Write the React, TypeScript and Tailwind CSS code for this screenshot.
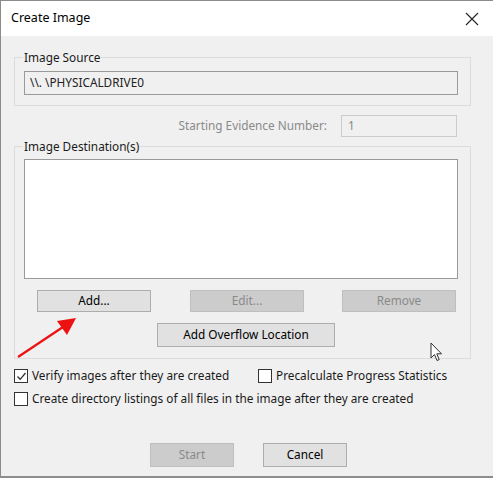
import React from 'react';

const font = { fontFamily: '"Noto Sans", "Open Sans", sans-serif' };

const Btn = ({ label, disabled, w, h = 'h-[22px]' }: { label: string; disabled?: boolean; w: string; h?: string }) => (
  <div
    className={`${w} ${h} flex items-center justify-center text-[11.8px] border ${
      disabled ? 'bg-[#cccccc] border-[#bfbfbf] text-[#8a8a8a]' : 'bg-[#e1e1e1] border-[#adadad] text-black'
    }`}
  >
    {label}
  </div>
);

const Check = ({ checked, label }: { checked?: boolean; label: string }) => (
  <div className="flex items-center h-4">
    <div className="w-[14px] h-[14px] border border-[#333] bg-white flex items-center justify-center">
      {checked && (
        <svg width="11" height="11" viewBox="0 0 11 11">
          <path d="M1.5 5.5 L4.2 8.3 L9.5 2" fill="none" stroke="#333" strokeWidth="1.3" />
        </svg>
      )}
    </div>
    <span className="ml-1 text-[11.8px] text-[#1a1a1a]">{label}</span>
  </div>
);

export default function App() {
  return (
    <div className="relative w-[493px] h-[478px] bg-[#f0f0f0] overflow-hidden border-t border-l border-[#8c8c8c]" style={font}>
      {/* Title bar */}
      <div className="h-[35px] bg-white flex items-center justify-between pl-[10px] pr-[14px]">
        <span className="text-[12.5px] text-black">Create Image</span>
        <svg width="14" height="14" viewBox="0 0 14 14">
          <path d="M1 1 L13 13 M13 1 L1 13" stroke="#222" strokeWidth="1.1" />
        </svg>
      </div>

      <div className="pl-[13px] pr-[22px] flex flex-col">
        {/* Image Source */}
        <fieldset className="mt-[13px] border border-[#dcdcdc] pl-[9px] pr-[12px] pb-[10px]">
          <legend className="px-[1px] -ml-[1px] text-[11.8px] leading-4 text-[#1a1a1a]">Image Source</legend>
          <div className="mt-[6px] h-[24px] border border-[#9a9a9a] bg-[#f0f0f0] flex items-center pl-[5px] text-[11.8px] text-[#222]">
            {'\\\\. \\PHYSICALDRIVE0'}
          </div>
        </fieldset>

        {/* Starting Evidence Number */}
        <div className="mt-[9px] flex items-center justify-end pr-[14px]">
          <span className="text-[11.8px] text-[#8a8a8a] mr-[14px]">Starting Evidence Number:</span>
          <div className="w-[116px] h-[22px] border border-[#cccccc] bg-[#f0f0f0] flex items-center pl-[6px] text-[11.8px] text-[#8a8a8a]">1</div>
        </div>

        {/* Image Destination(s) */}
        <fieldset className="mt-[1px] border border-[#dcdcdc] pl-[9px] pr-[12px] pb-[11px]">
          <legend className="px-[1px] -ml-[1px] text-[11.8px] leading-4 text-[#1a1a1a]">Image Destination(s)</legend>
          <div className="mt-[5px] h-[120px] border border-[#9a9a9a] bg-white" />
          <div className="mt-[11px] flex pl-[13px]">
            <Btn label="Add..." w="w-[114px]" />
            <div className="ml-[39px]">
              <Btn label="Edit..." w="w-[114px]" disabled />
            </div>
            <div className="ml-[38px]">
              <Btn label="Remove" w="w-[114px]" disabled />
            </div>
          </div>
          <div className="mt-[11px] flex pl-[133px]">
            <Btn label="Add Overflow Location" w="w-[178px]" h="h-[24px]" />
          </div>
        </fieldset>

        {/* Options */}
        <div className="mt-[9px] flex items-center">
          <div className="w-[244px]">
            <Check checked label="Verify images after they are created" />
          </div>
          <Check label="Precalculate Progress Statistics" />
        </div>
        <div className="mt-[7px]">
          <Check label="Create directory listings of all files in the image after they are created" />
        </div>

        {/* Footer */}
        <div className="mt-[36px] flex pl-[136px] gap-[29px]">
          <Btn label="Start" w="w-[84px]" h="h-[24px]" disabled />
          <Btn label="Cancel" w="w-[84px]" h="h-[24px]" />
        </div>
      </div>

      <div className="absolute left-0 right-0 bottom-0 h-[2px] bg-[#8c8c8c]" />

      {/* Red annotation arrow */}
      <svg className="absolute left-[14px] top-[312px]" width="66" height="48" viewBox="0 0 66 48">
        <path d="M3 44 L48 14" stroke="#ee1111" strokeWidth="2.2" />
        <path d="M61 5 L42 8 L52 22 Z" fill="#ee1111" />
      </svg>

      {/* Mouse cursor */}
      <svg className="absolute left-[429px] top-[341px]" width="14" height="21" viewBox="0 0 14 21">
        <path d="M1 1 L1 16 L4.5 12.5 L7 18.5 L9.2 17.6 L6.8 11.8 L11.5 11.8 Z" fill="#fff" stroke="#333" strokeWidth="1" />
      </svg>
    </div>
  );
}
